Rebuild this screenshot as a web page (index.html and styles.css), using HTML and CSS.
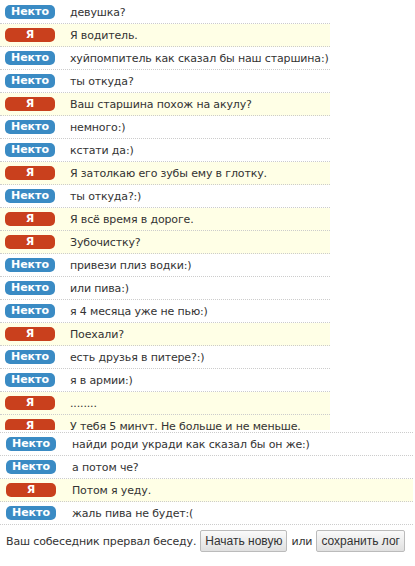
FILE: index.html
```html
<!DOCTYPE html>
<html lang="ru">
<head>
    <meta charset="UTF-8">
    <title>Чат</title>
    <link rel="stylesheet" href="styles.css">
</head>
<body>
    <div class="log">
        <div class="msg"><span class="who stranger">Некто</span><span class="text">девушка?</span></div>
        <div class="msg mine"><span class="who me">Я</span><span class="text">Я водитель.</span></div>
        <div class="msg"><span class="who stranger">Некто</span><span class="text">хуйпомпитель как сказал бы наш старшина:)</span></div>
        <div class="msg"><span class="who stranger">Некто</span><span class="text">ты откуда?</span></div>
        <div class="msg mine"><span class="who me">Я</span><span class="text">Ваш старшина похож на акулу?</span></div>
        <div class="msg"><span class="who stranger">Некто</span><span class="text">немного:)</span></div>
        <div class="msg"><span class="who stranger">Некто</span><span class="text">кстати да:)</span></div>
        <div class="msg mine"><span class="who me">Я</span><span class="text">Я затолкаю его зубы ему в глотку.</span></div>
        <div class="msg"><span class="who stranger">Некто</span><span class="text">ты откуда?:)</span></div>
        <div class="msg mine"><span class="who me">Я</span><span class="text">Я всё время в дороге.</span></div>
        <div class="msg mine"><span class="who me">Я</span><span class="text">Зубочистку?</span></div>
        <div class="msg"><span class="who stranger">Некто</span><span class="text">привези плиз водки:)</span></div>
        <div class="msg"><span class="who stranger">Некто</span><span class="text">или пива:)</span></div>
        <div class="msg"><span class="who stranger">Некто</span><span class="text">я 4 месяца уже не пью:)</span></div>
        <div class="msg mine"><span class="who me">Я</span><span class="text">Поехали?</span></div>
        <div class="msg"><span class="who stranger">Некто</span><span class="text">есть друзья в питере?:)</span></div>
        <div class="msg"><span class="who stranger">Некто</span><span class="text">я в армии:)</span></div>
        <div class="msg mine"><span class="who me">Я</span><span class="text">........</span></div>
        <div class="msg mine"><span class="who me">Я</span><span class="text">У тебя 5 минут. Не больше и не меньше.</span></div>
    </div>
    <div class="log2">
        <div class="msg"><span class="who stranger">Некто</span><span class="text">найди роди укради как сказал бы он же:)</span></div>
        <div class="msg"><span class="who stranger">Некто</span><span class="text">а потом че?</span></div>
        <div class="msg mine"><span class="who me">Я</span><span class="text">Потом я уеду.</span></div>
        <div class="msg"><span class="who stranger">Некто</span><span class="text">жаль пива не будет:(</span></div>
        <div class="status">
            <span>Ваш собеседник прервал беседу.</span>
            <button class="btn">Начать новую</button>
            <span>или</span>
            <button class="btn">сохранить лог</button>
        </div>
    </div>
</body>
</html>
```

FILE: styles.css
```css
*{
    margin: 0;
    padding: 0;
    box-sizing: border-box;
}
body{
    background-color: #fff;
    color: #333;
    font-family: "DejaVu Sans", Verdana, sans-serif;
    font-size: 11px;
    letter-spacing: -0.15px;
}
.log{
    width: 330px;
    height: 430px;
    padding-top: 1px;
    overflow: hidden;
}
.log2{
    width: 413px;
    margin-top: 2px;
    border-top: 1px dotted #ccc;
}
.msg{
    display: flex;
    align-items: center;
    height: 23px;
    padding-left: 5px;
    border-bottom: 1px dotted #ccc;
}
.log2 .msg{
    padding-left: 6px;
}
.msg.mine{
    background-color: #ffffe6;
}
.who{
    flex: none;
    width: 50px;
    height: 14px;
    line-height: 14px;
    border-radius: 5px;
    color: #fff;
    font-weight: bold;
    font-size: 11px;
    letter-spacing: 0;
    text-align: center;
}
.stranger{
    background-color: #3a8bc4;
}
.me{
    background-color: #c9401d;
}
.text{
    padding-left: 15px;
    white-space: nowrap;
}
.log2 .text{
    padding-left: 16px;
}
.status{
    display: flex;
    align-items: center;
    gap: 4px;
    padding: 5px 0 0 6px;
    white-space: nowrap;
}
.btn{
    height: 22px;
    padding: 0 4px;
    border: 1px solid #bbb;
    border-radius: 2px;
    background: linear-gradient(#fafafa, #e0e0e0);
    color: #333;
    font-family: "Liberation Sans", Arial, sans-serif;
    font-size: 12px;
    letter-spacing: 0;
}
```
